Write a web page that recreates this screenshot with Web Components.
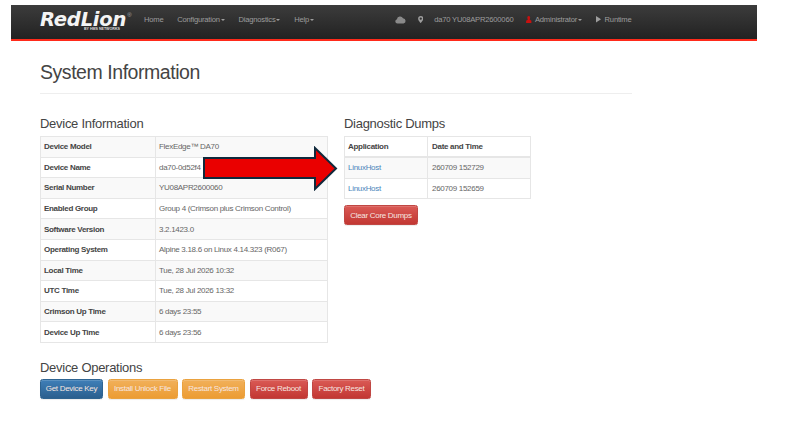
<!DOCTYPE html>
<html>
<head>
<meta charset="utf-8">
<title>System Information</title>
<style>
  html, body { margin: 0; padding: 0; background: #fff; }
  body { font-family: "Liberation Sans", Arial, sans-serif; font-size: 8px; letter-spacing: -.3px; color: #333; width: 792px; height: 436px; overflow: hidden; position: relative; }
</style>
</head>
<body>
<rl-navbar></rl-navbar>
<rl-page>
  <rl-section slot="left" heading="Device Information">
    <rl-table cols="114px 1fr">
      <rl-row striped><b>Device Model</b><span>FlexEdge™ DA70</span></rl-row>
      <rl-row><b>Device Name</b><span>da70-0d52f4</span></rl-row>
      <rl-row striped><b>Serial Number</b><span>YU08APR2600060</span></rl-row>
      <rl-row><b>Enabled Group</b><span>Group 4 (Crimson plus Crimson Control)</span></rl-row>
      <rl-row striped><b>Software Version</b><span>3.2.1423.0</span></rl-row>
      <rl-row><b>Operating System</b><span>Alpine 3.18.6 on Linux 4.14.323 (R067)</span></rl-row>
      <rl-row striped><b>Local Time</b><span>Tue, 28 Jul 2026 10:32</span></rl-row>
      <rl-row><b>UTC Time</b><span>Tue, 28 Jul 2026 13:32</span></rl-row>
      <rl-row striped><b>Crimson Up Time</b><span>6 days 23:55</span></rl-row>
      <rl-row><b>Device Up Time</b><span>6 days 23:56</span></rl-row>
    </rl-table>
  </rl-section>
  <rl-section slot="right" heading="Diagnostic Dumps">
    <rl-table cols="82px 1fr">
      <rl-row head><b>Application</b><b style="padding-left:4px">Date and Time</b></rl-row>
      <rl-row striped><a href="#" style="color:#4a86bb;text-decoration:none">LinuxHost</a><span style="padding-left:4px">260709 152729</span></rl-row>
      <rl-row><a href="#" style="color:#4a86bb;text-decoration:none">LinuxHost</a><span style="padding-left:4px">260709 152659</span></rl-row>
    </rl-table>
    <rl-toolbar style="margin-top:6px">
      <rl-button variant="danger" width="74px">Clear Core Dumps</rl-button>
    </rl-toolbar>
  </rl-section>
  <rl-section slot="bottom" heading="Device Operations" tight>
    <rl-toolbar>
      <rl-button variant="primary" width="63px">Get Device Key</rl-button>
      <rl-button variant="warning" width="70px">Install Unlock File</rl-button>
      <rl-button variant="warning" width="63px">Restart System</rl-button>
      <rl-button variant="danger" width="58px">Force Reboot</rl-button>
      <rl-button variant="danger" width="59px">Factory Reset</rl-button>
    </rl-toolbar>
  </rl-section>
</rl-page>
<rl-arrow></rl-arrow>

<script>
// --- Small helper so each element stays a few lines ---
function define(name, html, extra) {
  const tpl = document.createElement('template');
  tpl.innerHTML = html;
  class El extends HTMLElement {
    constructor() {
      super();
      this.attachShadow({ mode: 'open' }).appendChild(tpl.content.cloneNode(true));
    }
    connectedCallback() {
      if (extra) extra(this);
    }
  }
  customElements.define(name, El);
}

// --- Navbar ---
define('rl-navbar', `
  <style>
    :host { display: flex; align-items: flex-start; box-sizing: border-box; width: 746px; height: 36px; margin: 5px 0 0 11px; padding: 0 0 0 29px;
      background: linear-gradient(to bottom, #3c3c3c 0%, #222 100%); border-bottom: 2px solid #ff2a1a; color: #9d9d9d; font-size: 7.6px; letter-spacing: -.2px; }
    .logo { width: 104px; flex: none; margin-top: 7px; display: flex; flex-direction: column; }
    .top { display: flex; align-items: flex-start; }
    .word { color: #f4f4f4; font: italic 700 19.5px/15px "DejaVu Sans", sans-serif; letter-spacing: -.2px; white-space: nowrap; }
    .reg { color: #aaa; font-size: 6px; line-height: 7px; margin-left: 1px; letter-spacing: 0; }
    .by { margin: 0 0 0 44px; color: #ddd; font: 700 3.6px/5px "Liberation Sans", sans-serif; letter-spacing: 0; white-space: nowrap; }
    .caret { display: inline-block; border-top: 2px solid; border-left: 2px solid transparent; border-right: 2px solid transparent; margin-left: 1px; vertical-align: middle; }
    nav { display: flex; align-items: center; height: 9px; margin-top: 10px; }
    .left span { margin-right: 13.7px; }
    svg { display: block; }
  </style>
  <div class="logo">
    <div class="top"><span class="word">RedLion</span><span class="reg">®</span></div>
    <span class="by">BY HMS NETWORKS</span>
  </div>
  <nav class="left">
    <span>Home</span>
    <span>Configuration<i class="caret"></i></span>
    <span>Diagnostics<i class="caret"></i></span>
    <span>Help<i class="caret"></i></span>
  </nav>
  <nav class="right" style="margin-left:67px">
    <svg width="11" height="9" viewBox="0 0 12 10" style="margin-right:12px"><path fill="#8a8a8a" d="M2.6 9.5A2.5 2.5 0 0 1 2 4.6 3.6 3.6 0 0 1 8.8 3.6 3 3 0 0 1 9.4 9.5Z"/></svg>
    <svg width="5.5" height="7" viewBox="0 0 6 8" style="margin-right:11px"><path fill="#9d9d9d" fill-rule="evenodd" d="M3 0a3 3 0 0 1 3 3C6 5 3 8 3 8S0 5 0 3a3 3 0 0 1 3-3Zm0 1.7a1.3 1.3 0 1 0 0 2.6 1.3 1.3 0 0 0 0-2.6Z"/></svg>
    <span style="margin-right:13px">da70 YU08APR2600060</span>
    <svg width="5.5" height="7" viewBox="0 0 6 8" style="margin-right:3px"><path fill="#c9100f" d="M3 0C4.2 0 4.6 1 4.6 2S4.2 3.6 4 4L6 5.4V8H0V5.4L2 4C1.8 3.6 1.4 3 1.4 2S1.8 0 3 0Z"/></svg>
    <span style="margin-right:14px">Administrator<i class="caret"></i></span>
    <svg width="5.5" height="6.5" viewBox="0 0 6 7" style="margin-right:3px"><path fill="#9d9d9d" d="M0 0 5.5 3.5 0 7Z"/></svg>
    <span>Runtime</span>
  </nav>
`);

// --- Page layout: title, two columns, operations ---
define('rl-page', `
  <style>
    :host { display: block; width: 592px; margin-left: 40px; }
    h1 { font-weight: 400; font-size: 19.5px; letter-spacing: -.45px; line-height: 22px; color: #444; margin: 0; padding-top: 20px; padding-bottom: 10px; border-bottom: 1px solid #eee; }
    .cols { display: grid; grid-template-columns: 288px 187px; column-gap: 16px; margin-top: 22px; }
    .bottom { margin-top: 17px; }
  </style>
  <h1>System Information</h1>
  <div class="cols"><slot name="left"></slot><slot name="right"></slot></div>
  <div class="bottom"><slot name="bottom"></slot></div>
`);

// --- Heading plus content ---
define('rl-section', `
  <style>
    :host { display: block; }
    h3 { font-weight: 400; font-size: 13px; letter-spacing: -.28px; line-height: 15px; color: #444; margin: 0 0 5px; }
    :host([tight]) h3 { margin-bottom: 4px; }
  </style>
  <h3></h3>
  <slot></slot>
`, el => {
  el.shadowRoot.querySelector('h3').textContent = el.getAttribute('heading');
});

// --- Table: columns are handed to the rows with a custom property ---
define('rl-table', `
  <style>
    :host { display: block; border: 1px solid #e6e6e6; border-bottom: 0; }
  </style>
  <slot></slot>
`, el => {
  el.style.setProperty('--cols', el.getAttribute('cols'));
});

define('rl-row', `
  <style>
    :host { display: grid; grid-template-columns: var(--cols); box-sizing: border-box; height: 20.6px; border-bottom: 1px solid #e6e6e6; background: #fff; color: #666; }
    :host([striped]) { background: #f9f9f9; }
    :host([head]) { border-bottom-width: 2px; height: 21px; }
    ::slotted(*) { display: flex; align-items: center; padding-left: 3px; }
    ::slotted(b) { color: #444; }
    ::slotted(:nth-child(2)) { border-left: 1px solid #e6e6e6; }
  </style>
  <slot></slot>
`);

// --- Buttons ---
define('rl-toolbar', `
  <style>:host { display: flex; gap: 4.5px; }</style>
  <slot></slot>
`);

define('rl-button', `
  <style>
    :host { display: flex; align-items: center; justify-content: center; box-sizing: border-box; height: 20px; padding: 0 3px; border-radius: 2.5px; color: #f6e6e0; font-size: 8px; white-space: nowrap; box-shadow: inset 0 1px 0 rgba(255,255,255,.15), 0 1px 1px rgba(0,0,0,.075); }
    :host([variant=primary]) { background: linear-gradient(#3f7fb8, #2b5f8e); border: 1px solid #2e6390; }
    :host([variant=warning]) { background: linear-gradient(#f1b05a, #ec9c33); border: 1px solid #eaa23f; }
    :host([variant=danger]) { background: linear-gradient(#da5a55, #c23733); border: 1px solid #c04743; }
  </style>
  <slot></slot>
`, el => {
  if (el.hasAttribute('width')) el.style.width = el.getAttribute('width');
});

// --- Red annotation arrow lying over the page ---
define('rl-arrow', `
  <style>:host { display: block; position: absolute; left: 202px; top: 146px; width: 136px; height: 45px; }</style>
  <svg width="136" height="45" viewBox="0 0 136 45"><path fill="#ea0000" stroke="#10293c" stroke-width="2" d="M2 12H113V2L134 22.5 113 43V32H2Z"/></svg>
`);
</script>
</body>
</html>
